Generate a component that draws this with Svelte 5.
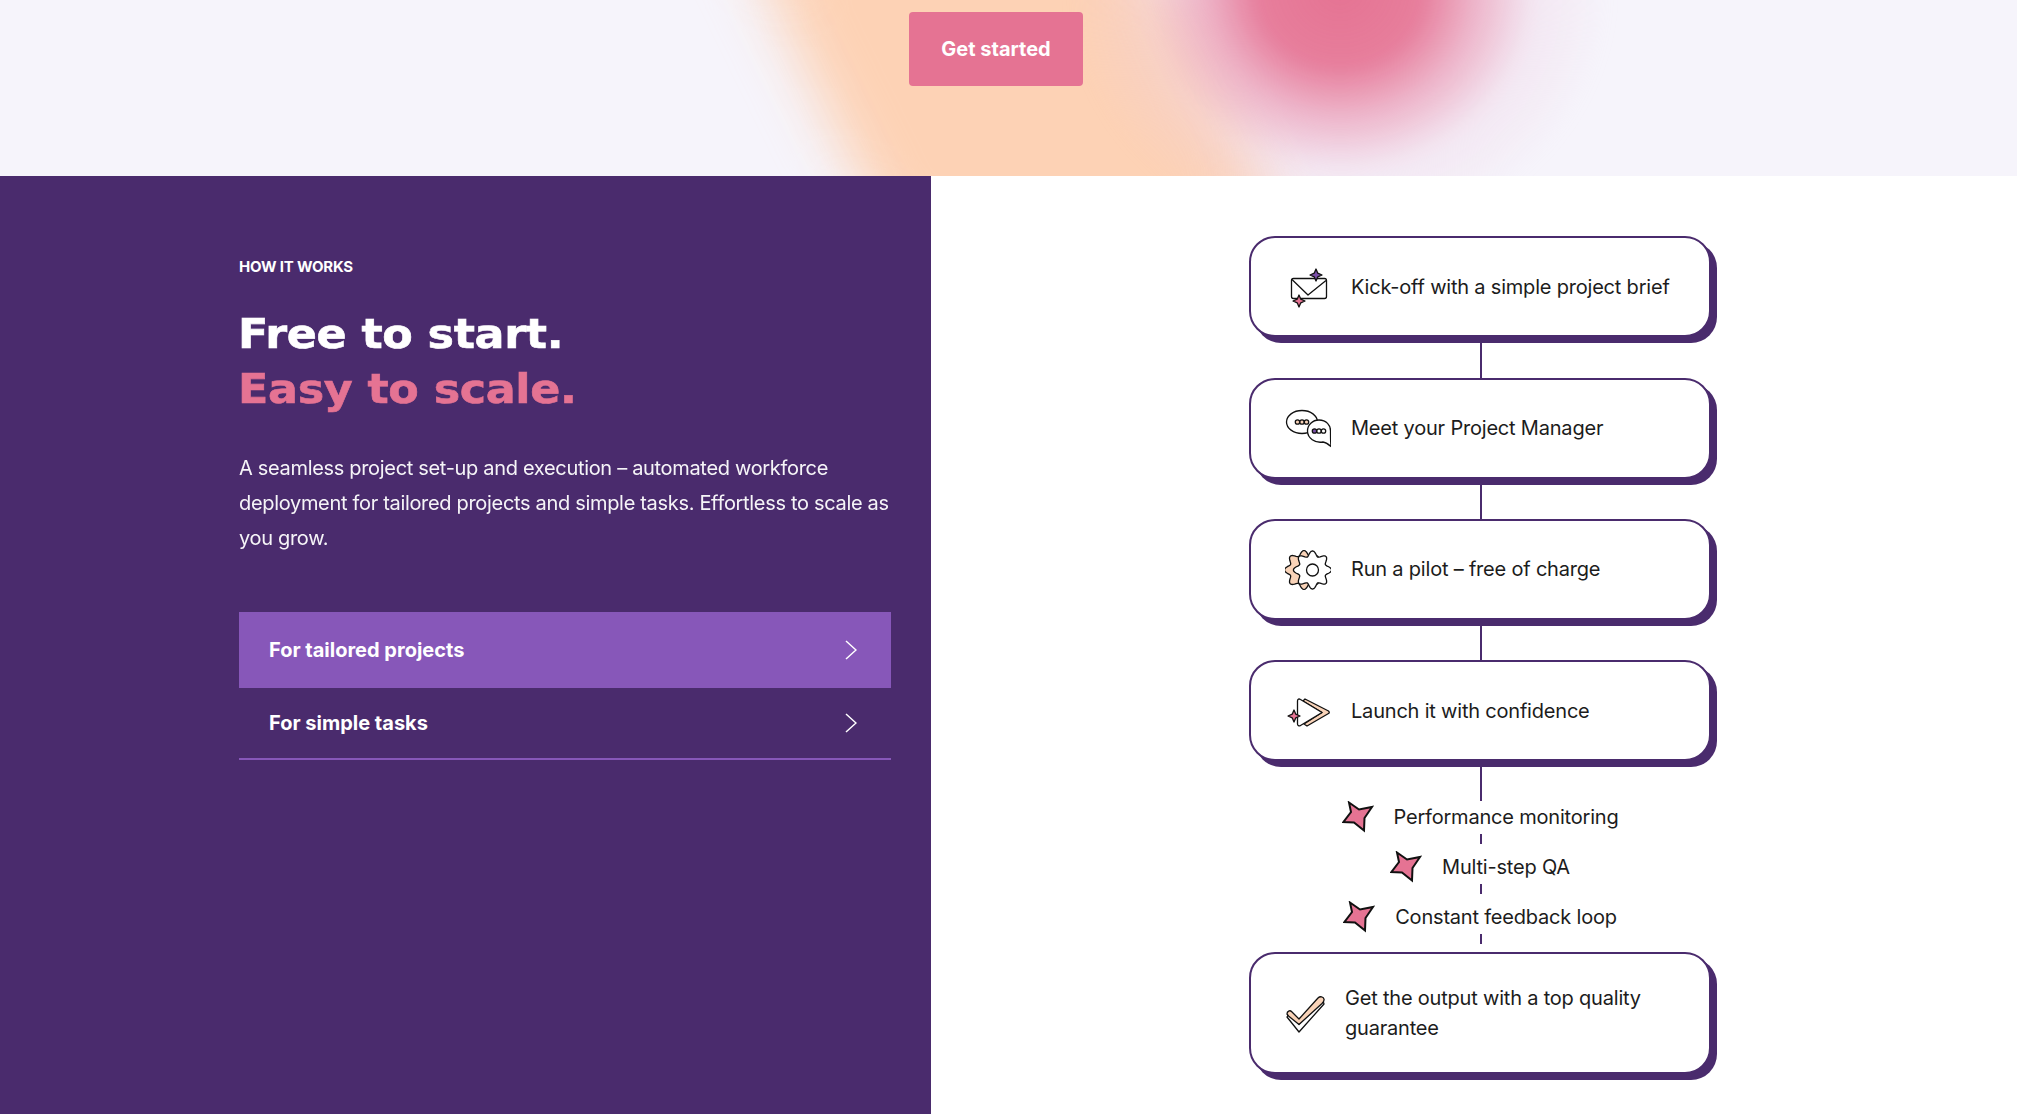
<script>
	const steps = [
		{ icon: 'mail', text: 'Kick-off with a simple project brief' },
		{ icon: 'chat', text: 'Meet your Project Manager' },
		{ icon: 'gear', text: 'Run a pilot – free of charge' },
		{ icon: 'play', text: 'Launch it with confidence' }
	];
	const checks = ['Performance monitoring', 'Multi-step QA', 'Constant feedback loop'];
	const tabs = [
		{ label: 'For tailored projects', active: true },
		{ label: 'For simple tasks', active: false }
	];

	// wobbly cog outline, sampled around the circle
	function cog(cx, cy, r, amp, lobes) {
		let d = '';
		for (let i = 0; i < 96; i++) {
			const t = (i / 96) * Math.PI * 2;
			const rad = r + amp * Math.cos(lobes * t);
			d += (i ? 'L' : 'M') + (cx + rad * Math.cos(t)).toFixed(2) + ' ' + (cy + rad * Math.sin(t)).toFixed(2);
		}
		return d + 'Z';
	}

	// four point sparkle
	function spark(x, y, r) {
		const q = r * 0.3;
		return `M${x} ${y - r}L${x + q} ${y - q}L${x + r} ${y}L${x + q} ${y + q}L${x} ${y + r}L${x - q} ${y + q}L${x - r} ${y}L${x - q} ${y - q}Z`;
	}
</script>

{#snippet stepIcon(name)}
	{#if name === 'mail'}
		<svg class="icon" width="46" height="46" viewBox="0 0 46 46">
			<rect x="6.500" y="14.500" width="35" height="20" rx="2" fill="#fff" />
			<path d="M7 15.500L23 31L41 16.500" fill="none" />
			<path d={spark(31, 11, 6)} class="purple" />
			<path d={spark(14, 37, 6)} class="pink" />
		</svg>
	{:else if name === 'chat'}
		<svg class="icon" width="46" height="46" viewBox="0 0 46 46">
			<ellipse cx="17" cy="17" rx="15.500" ry="11.500" fill="#fff" />
			<circle cx="12.500" cy="17" r="2.200" class="peach" />
			<circle cx="17" cy="17" r="2.200" class="peach" />
			<circle cx="21.500" cy="17" r="2.200" class="peach" />
			<path d="M34 15C41 15 46 20 45.500 27C45.500 32 45.500 37 46 41.500C43 39 41 37.500 38 37C30 38.500 22.500 33 22.500 26C22.500 20 27.500 15 34 15Z" fill="#fff" />
			<circle cx="29.500" cy="26" r="2.200" class="purple" />
			<circle cx="34" cy="26" r="2.200" fill="#fff" />
			<circle cx="38.500" cy="26" r="2.200" fill="#fff" />
		</svg>
	{:else if name === 'gear'}
		<svg class="icon" width="46" height="46" viewBox="0 0 46 46">
			<path d={cog(19, 24, 17, 2.500, 8)} class="peach" />
			<path d={cog(27.500, 24, 16.500, 2.600, 8)} fill="#fff" />
			<circle cx="27.500" cy="24" r="6" fill="#fff" />
		</svg>
	{:else if name === 'play'}
		<svg class="icon" width="46" height="46" viewBox="0 0 46 46">
			<path d="M20 11L43.500 23C44.500 24 44.500 25 43.500 25.500L22 38L19 36L37 24.500L18 13Z" class="peach" />
			<path d="M12.500 13C12.500 11 14 10.500 15.500 11.500L37 24.500L15.500 37.500C14 38.500 12.500 37.500 12.500 36Z" fill="#fff" />
			<path d={spark(9, 28, 6)} class="pink" />
		</svg>
	{:else}
		<svg class="icon" width="40" height="40" viewBox="0 0 40 40">
			<path d="M2 24L14 39L39 11L38 8L14 31L5 19Z" fill="#fff" />
			<path d="M2 21C2 18 5 17 6.500 18.500L14 26L33 5C35 3 38.500 3.500 39 6C39.500 8 38.500 9 37 10.500L14 31.500L3.500 23Z" class="peach" />
		</svg>
	{/if}
{/snippet}

<div class="page">
	<section class="hero">
		<div class="blob blob-peach"></div>
		<div class="blob blob-pink"></div>
		<button class="cta">Get started</button>
	</section>

	<section class="how">
		<div class="panel">
			<p class="eyebrow">HOW IT WORKS</p>
			<h2>Free to start.<br /><span>Easy to scale.</span></h2>
			<p class="lead">
				A seamless project set-up and execution – automated workforce deployment for tailored
				projects and simple tasks. Effortless to scale as you grow.
			</p>
			<div class="tabs">
				{#each tabs as tab}
					<button class="tab" class:active={tab.active}>
						{tab.label}
						<svg width="12" height="20" viewBox="0 0 12 20"><path d="M1 1L11 10L1 19" /></svg>
					</button>
				{/each}
			</div>
		</div>

		<div class="flow">
			{#each steps as step}
				<div class="card">
					{@render stepIcon(step.icon)}
					<span>{step.text}</span>
				</div>
				<div class="line"></div>
			{/each}
			<div class="checks">
				{#each checks as check}
					<div class="check">
						<svg class="star" width="32" height="32" viewBox="0 0 32 32">
							<path d="M7 1.500L17 8.500L30 6L22.500 17L22 29.500L12 21.500L1.500 21L9 11Z" />
						</svg>
						<span>{check}</span>
					</div>
					<div class="dash"></div>
				{/each}
			</div>
			<div class="card tall">
				{@render stepIcon('tick')}
				<span>Get the output with a top quality guarantee</span>
			</div>
		</div>
	</section>
</div>

<style>
	:global(body) {
		margin: 0;
		background: #fff;
	}

	.page {
		height: 1114px;
		overflow: hidden;
		font-family: Inter, 'Liberation Sans', sans-serif;
	}

	.hero {
		position: relative;
		height: 176px;
		overflow: hidden;
		background: #f6f4fb;
		display: flex;
		justify-content: center;
		padding: 12px 25px 0 0;
		box-sizing: border-box;
	}

	.blob {
		position: absolute;
	}

	.blob-peach {
		left: 815px;
		top: -120px;
		width: 405px;
		height: 416px;
		border-radius: 30%;
		background: #fdd2b5;
		filter: blur(32px);
		transform: skewX(26deg);
	}

	.blob-pink {
		left: 1070px;
		top: -260px;
		width: 540px;
		height: 500px;
		background: radial-gradient(
			ellipse closest-side,
			#e57393 0%,
			rgba(229, 115, 147, 0.92) 30%,
			rgba(233, 150, 178, 0.68) 50%,
			rgba(238, 205, 225, 0.32) 72%,
			rgba(240, 225, 240, 0) 100%
		);
		filter: blur(8px);
	}

	.cta {
		position: relative;
		width: 174px;
		height: 74px;
		border: 0;
		border-radius: 4px;
		background: #e57393;
		color: #fff;
		font: 700 20px Inter, sans-serif;
	}

	.how {
		display: grid;
		grid-template-columns: 931px 1fr;
		height: 938px;
	}

	.panel {
		background: #4a2b6d;
		color: #fff;
		padding: 81px 40px 0 239px;
	}

	.eyebrow {
		margin: 0;
		font-size: 15px;
		line-height: 20px;
		font-weight: 700;
		letter-spacing: -0.2px;
	}

	h2 {
		margin: 30px 0 0 -1px;
		font: 700 40px/55px 'DejaVu Sans', sans-serif;
		letter-spacing: -0.3px;
		transform: scaleX(1.11);
		transform-origin: left;
		-webkit-text-stroke: 0.6px currentColor;
	}

	h2 span {
		color: #e57393;
	}

	.lead {
		margin: 34px -15px 0 0;
		font-size: 20px;
		line-height: 35px;
		font-weight: 400;
		letter-spacing: -0.32px;
		opacity: 0.95;
	}

	.tabs {
		margin-top: 56px;
		border-bottom: 2px solid #8757b9;
	}

	.tab {
		display: flex;
		align-items: center;
		justify-content: space-between;
		width: 100%;
		height: 70px;
		padding: 0 34px 0 30px;
		border: 0;
		background: none;
		color: #fff;
		font: 700 20px Inter, sans-serif;
	}

	.tab.active {
		height: 76px;
		background: #8757b9;
	}

	.tab path {
		fill: none;
		stroke: #fff;
		stroke-width: 1.500;
	}

	.flow {
		display: flex;
		flex-direction: column;
		width: 462px;
		margin: 60.3px 0 0 318px;
		color: #1c1c1c;
		font-size: 20px;
		letter-spacing: -0.2px;
	}

	.card {
		display: flex;
		align-items: center;
		gap: 20px;
		box-sizing: border-box;
		height: 101px;
		padding: 0 36px 0 34px;
		line-height: 30px;
		background: #fff;
		border: 2px solid #4a2b6d;
		border-radius: 26px;
		box-shadow: 6px 6px 0 #4a2b6d;
	}

	.card.tall {
		height: 122px;
	}

	.icon {
		flex: none;
		stroke: #111;
		stroke-width: 1.300;
		stroke-linejoin: round;
	}

	.purple {
		fill: #7b4fa8;
	}

	.pink {
		fill: #e57393;
	}

	.peach {
		fill: #f9d3b8;
	}

	.line {
		width: 2px;
		height: 40.3px;
		margin-left: 2px;
		align-self: center;
		background: #4a2b6d;
	}

	.checks {
		display: flex;
		flex-direction: column;
		margin-top: 0.7px;
	}

	.check {
		display: flex;
		align-items: center;
		justify-content: center;
		gap: 20px;
		height: 30px;
		line-height: 30px;
	}

	.star path {
		fill: #e57393;
		stroke: #111;
		stroke-width: 2;
		stroke-linejoin: miter;
	}

	.dash {
		width: 2px;
		height: 10px;
		margin: 2px 0 8px 2px;
		align-self: center;
		background: #4a2b6d;
	}
</style>
